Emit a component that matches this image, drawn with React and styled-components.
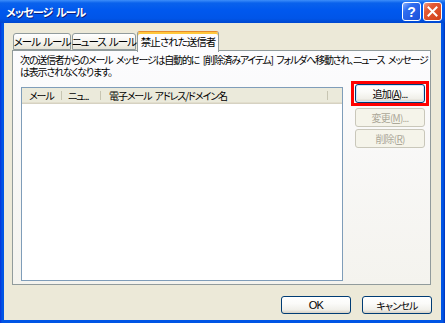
import styled, { createGlobalStyle } from 'styled-components';

const GlobalStyle = createGlobalStyle`
  html, body {
    margin: 0;
    padding: 0;
    background: #ece9d8;
  }
  body {
    font-family: "Noto Sans CJK JP", "Liberation Sans", sans-serif;
    font-size: 10px;
    font-feature-settings: "palt";
  }
`;

const Window = styled.div`
  width: 445px;
  height: 323px;
  display: flex;
  flex-direction: column;
  background: linear-gradient(90deg, #0831d9 0, #0055e5 2px, #0055e5 calc(100% - 2px), #0031b8 100%);
  overflow: hidden;
`;

const TitleBar = styled.div`
  height: 23px;
  flex: none;
  display: flex;
  align-items: center;
  padding: 0 3px 0 6px;
  background: linear-gradient(#3d8efa 0, #0a62ec 3px, #0058ee 45%, #0055e8 80%, #0047cf 100%);
`;

const Title = styled.div`
  flex: 1;
  color: #fff;
  font-weight: bold;
  font-size: 11px;
  letter-spacing: -0.9px;
  word-spacing: 2px;
  text-shadow: 1px 1px 0 #0a1f7d;
`;

const CaptionButton = styled.div`
  width: 19px;
  height: 19px;
  box-sizing: border-box;
  margin-left: 2px;
  border: 1px solid #fff;
  border-radius: 3px;
  display: flex;
  align-items: center;
  justify-content: center;
  color: #fff;
  font-family: "Liberation Sans", sans-serif;
  font-weight: bold;
  font-size: 14px;
  background: ${p => p.close
    ? 'linear-gradient(135deg, #f0a08a 0, #e45a35 30%, #d0401a 100%)'
    : 'linear-gradient(135deg, #8ab4ff 0, #2f6df0 30%, #1b4fd8 100%)'};
`;

const Frame = styled.div`
  flex: 1;
  display: flex;
  flex-direction: column;
  margin: 0 4px 3px 4px;
  padding: 8px 10px 0 8px;
  background: #ece9d8;
`;

const TabRow = styled.div`
  height: 19px;
  display: flex;
  align-items: flex-end;
  padding-left: 1px;
  position: relative;
  z-index: 1;
`;

const Tab = styled.div`
  width: ${p => p.w}px;
  height: ${p => (p.active ? 21 : 17)}px;
  margin-right: ${p => (p.active ? 0 : 1)}px;
  margin-bottom: ${p => (p.active ? -2 : 0)}px;
  box-sizing: border-box;
  border: 1px solid #919b9c;
  border-bottom: ${p => (p.active ? 'none' : '1px solid #919b9c')};
  border-top-color: ${p => (p.active ? '#e68b2c' : '#919b9c')};
  border-radius: 3px 3px 0 0;
  display: flex;
  justify-content: center;
  padding-top: ${p => (p.active ? 3 : 1)}px;
  line-height: 13px;
  font-size: 10.5px;
  color: #000;
  white-space: pre;
  letter-spacing: -1px;
  word-spacing: 2px;
  background: ${p => (p.active ? '#fcfcfe' : 'linear-gradient(#ffffff, #f3f2ec 60%, #e6e3d6)')};
  box-shadow: ${p => (p.active ? 'inset 0 2px 0 #ffc83c' : 'none')};
`;

const Panel = styled.div`
  height: 235px;
  box-sizing: border-box;
  border: 1px solid #919b9c;
  display: flex;
  flex-direction: column;
  padding: 3px 0 3px 7px;
  background: linear-gradient(#fcfcfe, #f4f3ee);
`;

const Description = styled.div`
  line-height: 12px;
  white-space: nowrap;
  letter-spacing: -1.2px;
  word-spacing: 2.5px;
  color: #000;
`;

const Content = styled.div`
  flex: 1;
  display: flex;
  align-items: stretch;
  margin-top: 3px;
`;

const ListView = styled.div`
  width: 322px;
  margin-top: 6px;
  margin-left: 1px;
  box-sizing: border-box;
  border: 1px solid #7f9db9;
  background: #fff;
`;

const HeaderRow = styled.div`
  height: 16px;
  display: flex;
  background: #ebeadb;
  box-shadow: inset 0 -1px 0 #d6d2c2, inset 0 -2px 0 #e2decd;
`;

const HeaderCell = styled.div`
  width: ${p => p.w}px;
  box-sizing: border-box;
  padding-left: ${p => p.pad}px;
  line-height: 16px;
  white-space: nowrap;
  overflow: hidden;
  letter-spacing: -1.1px;
  word-spacing: 2px;
  position: relative;
  &::after {
    content: '';
    display: ${p => (p.last ? 'none' : 'block')};
    position: absolute;
    right: 0;
    top: 3px;
    bottom: 4px;
    width: 1px;
    background: #c7c5b2;
    box-shadow: 1px 0 0 #fff;
  }
`;

const ButtonColumn = styled.div`
  width: 78px;
  margin-left: 8px;
  display: flex;
  flex-direction: column;
  align-items: center;
`;

const Highlight = styled.div`
  border: 3px solid #ff0000;
  padding: 0 1px;
`;

const Button = styled.div`
  width: ${p => p.w || 70}px;
  height: ${p => p.h || 19}px;
  margin-top: ${p => p.mt || 0}px;
  box-sizing: border-box;
  border: 1px solid ${p => (p.disabled ? '#c9c7ba' : '#003c74')};
  border-radius: 3px;
  display: flex;
  align-items: center;
  justify-content: center;
  color: ${p => (p.disabled ? '#aca899' : '#000')};
  letter-spacing: -0.8px;
  white-space: nowrap;
  background: ${p => (p.disabled
    ? '#f5f4ea'
    : 'linear-gradient(#ffffff 0, #fbfbf9 40%, #f0efe9 80%, #d6d0c5 100%)')};
  box-shadow: ${p => (p.focus ? 'inset 0 0 0 1px #cee7ff' : 'none')};
  font-family: ${p => (p.latin ? '"Liberation Sans", sans-serif' : 'inherit')};
  font-size: ${p => (p.latin ? 11 : 10)}px;
  u {
    text-decoration: underline;
  }
`;

const Footer = styled.div`
  height: 35px;
  display: flex;
  justify-content: flex-end;
  align-items: flex-start;
  padding-top: 11px;
  box-sizing: border-box;
  gap: 11px;
  margin-right: -1px;
`;

export default function App() {
  return (
    <>
      <GlobalStyle />
      <Window>
        <TitleBar>
          <Title>メッセージ ルール</Title>
          <CaptionButton>?</CaptionButton>
          <CaptionButton close>
            <svg width="11" height="11" viewBox="0 0 11 11">
              <path d="M1.5 1.5 L9.5 9.5 M9.5 1.5 L1.5 9.5" stroke="#fff" strokeWidth="2" strokeLinecap="square" />
            </svg>
          </CaptionButton>
        </TitleBar>
        <Frame>
          <TabRow>
            <Tab w={58}>メール ルール</Tab>
            <Tab w={64}>ニュース ルール</Tab>
            <Tab w={82} active>禁止された送信者</Tab>
          </TabRow>
          <Panel>
            <Description>
              次の送信者からのメール メッセージは自動的に [削除済みアイテム] フォルダへ移動され、ニュース メッセージ
              <br />
              は表示されなくなります。
            </Description>
            <Content>
              <ListView>
                <HeaderRow>
                  <HeaderCell w={40} pad={7}>メール</HeaderCell>
                  <HeaderCell w={39} pad={6}>ニュ...</HeaderCell>
                  <HeaderCell w={227} pad={8}>電子メール アドレス/ドメイン名</HeaderCell>
                  <HeaderCell w={14} last />
                </HeaderRow>
              </ListView>
              <ButtonColumn>
                <Highlight>
                  <Button focus>追加(<u>A</u>)...</Button>
                </Highlight>
                <Button disabled mt={2}>変更(<u>M</u>)...</Button>
                <Button disabled mt={2}>削除(<u>R</u>)</Button>
              </ButtonColumn>
            </Content>
          </Panel>
          <Footer>
            <Button w={70} h={18} latin>OK</Button>
            <Button w={70} h={18}>キャンセル</Button>
          </Footer>
        </Frame>
      </Window>
    </>
  );
}
